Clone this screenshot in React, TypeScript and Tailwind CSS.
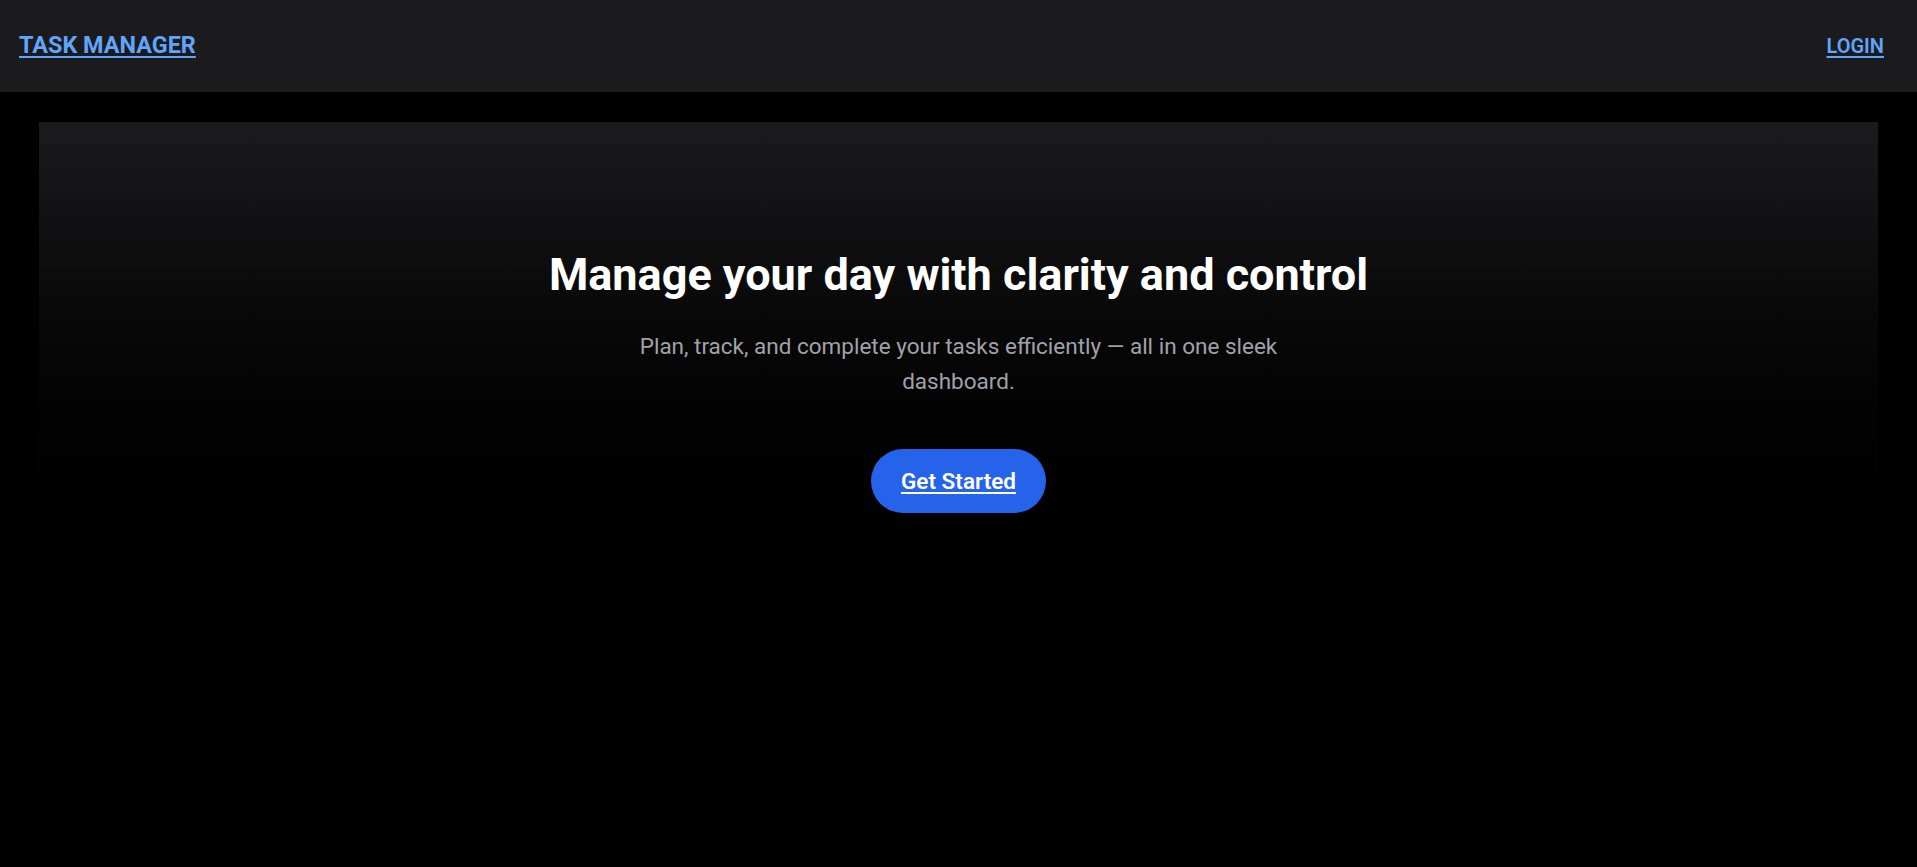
const Header = () => (
  <header className="flex h-[92px] items-center justify-between bg-[#1b1b1d] pl-[19px] pr-[33px]">
    <a href="#" className="text-[23.4px] font-bold leading-none text-[#60a5fa] underline underline-offset-[3px]">
      TASK MANAGER
    </a>
    <a href="#" className="text-[20px] font-semibold leading-none text-[#60a5fa] underline underline-offset-[3px]">
      LOGIN
    </a>
  </header>
);

const Hero = () => (
  <section className="mx-[39px] mt-[30px] flex flex-col items-center bg-linear-to-b from-[#1b1b1d] to-black pb-[111px] pt-[126px] text-center">
    <h1 className="text-[45px] font-bold leading-[1.2] text-white">
      Manage your day with clarity and control
    </h1>
    <p className="mt-[27px] max-w-[691px] text-[22.5px] leading-[35px] text-[#a1a1aa]">
      Plan, track, and complete your tasks efficiently — all in one sleek dashboard.
    </p>
    <a
      href="#"
      className="mt-[50px] rounded-full bg-[#2563eb] px-[30px] py-[16px] text-[22.5px] font-semibold leading-[32px] text-white underline underline-offset-[3px]"
    >
      Get Started
    </a>
  </section>
);

export default function App() {
  return (
    <div className="min-h-[867px] bg-black font-['Roboto',sans-serif]">
      <Header />
      <Hero />
    </div>
  );
}
